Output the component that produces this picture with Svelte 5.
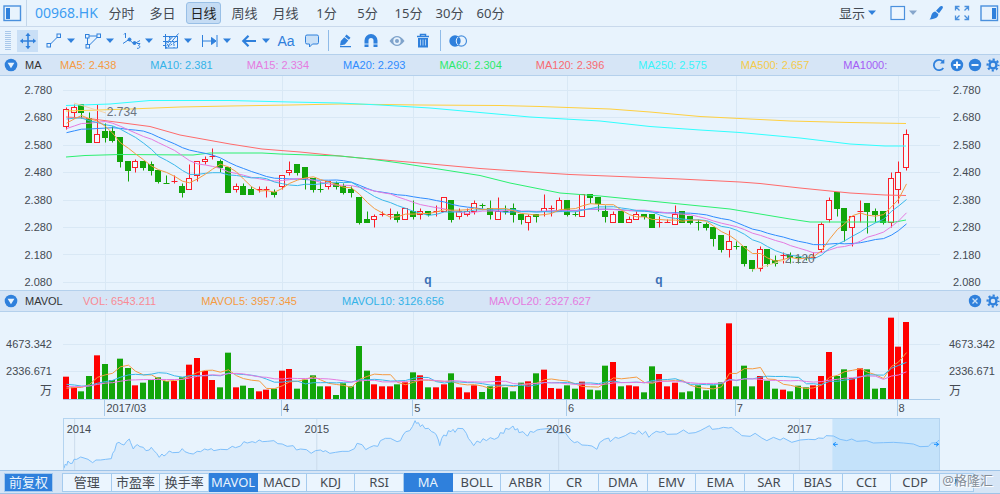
<script lang="ts">
  // up, high, body top, body bottom, low (in cents)
  const candles = [
    [1, 272, 271, 265, 264], [1, 273, 272, 270, 268], [0, 273, 273, 270, 268], [0, 270, 268, 259, 259],
    [1, 273, 262, 259, 259], [0, 266, 263, 261, 259], [0, 265, 263, 260, 259], [0, 261, 261, 252, 250],
    [0, 252, 252, 249, 245], [1, 253, 252, 250, 248], [0, 252, 252, 250, 249], [0, 252, 251, 249, 247],
    [0, 249, 249, 245, 244], [0, 247, 244, 244, 244], [1, 247, 245, 245, 244], [0, 244, 243, 241, 239],
    [1, 251, 246, 242, 242], [1, 252, 252, 247, 245], [1, 254, 253, 252, 251], [1, 257, 254, 254, 253],
    [0, 253, 252, 250, 248], [0, 250, 250, 241, 241], [1, 244, 243, 242, 241], [0, 244, 243, 240, 240],
    [0, 243, 242, 240, 240], [1, 243, 242, 242, 241], [1, 243, 242, 242, 239], [0, 242, 241, 240, 239],
    [1, 247, 247, 243, 242], [1, 252, 249, 248, 247], [0, 251, 251, 248, 247], [0, 250, 250, 246, 242],
    [0, 246, 246, 242, 241], [0, 245, 242, 242, 241], [1, 245, 245, 243, 242], [0, 245, 244, 243, 242],
    [0, 244, 243, 241, 240], [0, 243, 242, 241, 239], [0, 239, 239, 230, 229], [0, 234, 231, 230, 230],
    [1, 233, 232, 231, 228], [1, 234, 233, 233, 232], [1, 235, 233, 233, 231], [0, 234, 233, 231, 230],
    [1, 235, 235, 231, 231], [0, 238, 234, 232, 231], [1, 235, 234, 233, 231], [0, 234, 234, 233, 232],
    [1, 236, 234, 234, 232], [1, 239, 239, 234, 234], [0, 238, 238, 231, 230], [1, 235, 234, 232, 231],
    [1, 235, 234, 233, 232], [1, 238, 237, 234, 233], [0, 237, 236, 236, 235], [0, 238, 235, 233, 231],
    [1, 239, 234, 231, 231], [0, 236, 234, 234, 233], [0, 237, 235, 233, 230], [0, 233, 233, 231, 229],
    [1, 233, 232, 230, 227], [0, 233, 233, 232, 230], [1, 240, 235, 234, 232], [1, 236, 235, 235, 232],
    [1, 239, 238, 234, 234], [0, 238, 238, 233, 232], [0, 234, 233, 233, 232], [1, 240, 240, 232, 232],
    [0, 240, 240, 239, 237], [0, 239, 239, 237, 234], [0, 236, 234, 232, 230], [1, 234, 233, 230, 230],
    [0, 234, 234, 230, 230], [1, 232, 231, 230, 230], [1, 234, 233, 231, 231], [0, 233, 233, 232, 231],
    [0, 233, 233, 228, 228], [1, 232, 230, 230, 228], [1, 231, 230, 230, 230], [1, 236, 233, 229, 229],
    [0, 234, 234, 230, 230], [0, 232, 232, 230, 229], [0, 231, 230, 230, 227], [0, 230, 229, 228, 227],
    [0, 228, 228, 224, 221], [0, 225, 225, 220, 219], [1, 227, 223, 220, 217], [0, 223, 221, 221, 220],
    [0, 221, 221, 215, 214], [0, 216, 216, 213, 212], [1, 221, 220, 213, 212], [0, 220, 220, 215, 214],
    [0, 218, 216, 215, 214], [1, 219, 218, 218, 215], [0, 219, 218, 217, 215], [0, 218, 217, 217, 215],
    [0, 218, 217, 217, 216], [1, 219, 217, 217, 216], [1, 230, 229, 220, 219], [1, 239, 238, 231, 230],
    [0, 241, 241, 235, 232], [0, 235, 235, 227, 223], [1, 232, 232, 228, 221], [1, 238, 234, 234, 230],
    [0, 237, 237, 234, 226], [0, 235, 234, 233, 230], [0, 234, 234, 230, 229], [1, 248, 246, 230, 228],
    [1, 252, 248, 242, 237], [1, 264, 262, 250, 249]
  ];

  const volumes = [
    67, 35, 23, 69, 131, 105, 57, 121, 93, 41, 49, 57, 65, 54, 54, 65, 103, 123, 84, 57, 35, 139, 35, 40, 33, 23,
    28, 31, 85, 90, 31, 58, 71, 38, 38, 12, 47, 38, 159, 85, 44, 38, 38, 44, 50, 80, 71, 35, 35, 44, 77, 35, 20,
    41, 21, 38, 69, 35, 23, 49, 53, 77, 88, 33, 31, 41, 31, 52, 28, 26, 100, 111, 38, 41, 38, 20, 98, 75, 38, 49,
    20, 23, 41, 26, 41, 50, 227, 38, 100, 38, 69, 55, 31, 28, 23, 40, 35, 41, 69, 141, 69, 89, 63, 92, 89, 31, 33,
    244, 157, 231
  ];

  // values before the visible range, so the averages start at the left edge
  const priorCloses = [
    ...Array(5).fill(258), ...Array(5).fill(257), ...Array(5).fill(269), 264, 264, 265, 266
  ];
  const priorVolumes = [...Array(10).fill(30), ...Array(5).fill(56), 23, 23, 24, 23];

  const step = 7.706;
  const px = (i: number) => Math.round(3 + i * step) + 0.5;
  const py = (cents: number) => 14.3 + (278 - cents) * 2.738;
  const row = (cents: number) => Math.round(py(cents)) + 0.5;
  const vy = (v: number) => 87 - v / 3;

  function average(prior: number[], values: number[], n: number, y: (v: number) => number) {
    const all = [...prior, ...values];
    return values
      .map((_, i) => {
        const end = i + prior.length + 1;
        const sum = all.slice(end - n, end).reduce((a, b) => a + b, 0);
        return `${px(i)},${y(sum / n).toFixed(1)}`;
      })
      .join(' ');
  }

  const closes = candles.map(([up, , top, bottom]) => (up ? top : bottom));

  const priceLines = [
    { color: '#ffd040', points: '3,35 67,33 117,31 167,30 227,29 277,28 357,29 437,29.5 477,30.5 547,33 587,36 637,40.5 677,42.5 727,45 787,46.5 843,47.5' },
    { color: '#30ffff', points: '3,29.5 47,28 87,24.5 167,24.5 227,26 277,27 317,29 367,32 417,36.5 467,41 537,45 587,50.5 637,54 677,56.5 737,62 787,68 822,70 843,70' },
    { color: '#ff6b6b', points: '3,41 22,42 45,45 87,50.5 117,59 167,68 199,73 237,76 297,82 357,87 417,92.5 467,96 507,98.5 557,100.5 617,103 677,106 697,107.5 737,112 787,117 822,119 843,119.5' },
    { color: '#2cf070', points: '3,81 22,79.5 57,78.5 130,79 147,77 199,77 217,78 277,80 307,83 337,87 369,92 417,99.5 447,107 497,117 537,120 587,125 637,130 667,133 697,138 727,143 747,146 767,146 832,146 843,144' },
    { color: '#2f8cff', points: average(priorCloses, closes, 20, py) },
    { color: '#e57be0', points: average(priorCloses, closes, 15, py) },
    { color: '#3ab8ea', points: average(priorCloses, closes, 10, py) },
    { color: '#f59b42', points: average(priorCloses, closes, 5, py) }
  ];

  const volumeLines = [
    { color: '#f59b42', points: average(priorVolumes, volumes, 5, vy) },
    { color: '#3ab8ea', points: average(priorVolumes, volumes, 10, vy) },
    { color: '#e57be0', points: average(priorVolumes, volumes, 20, vy) }
  ];

  const months = [
    { label: '', span: 42 },
    { label: '2017/03', span: 177 },
    { label: '4', span: 131 },
    { label: '5', span: 154 },
    { label: '6', span: 169 },
    { label: '7', span: 162 },
    { label: '8', span: 42 }
  ];
  const monthLines = [42, 219, 350, 504, 673, 835];

  const prices = ['2.780', '2.680', '2.580', '2.480', '2.380', '2.280', '2.180', '2.080'];

  const history =
    '190,205 194,192 198,196 202,183 208,190 215,190 220,178 228,178 240,171 250,174 262,178 276,188 286,180 300,180 315,178 332,176 336,160 342,152 348,130 355,127 362,132 370,135 378,124 386,117 390,128 398,147 404,138 410,134 418,140 428,142 436,152 446,150 452,142 460,152 468,160 476,172 484,162 490,168 496,164 506,153 516,158 536,157 545,146 553,155 566,160 578,162 590,154 600,155 612,147 622,150 632,146 640,152 660,148 680,149 695,139 705,143 720,138 730,125 740,129 755,125 765,128 776,120 786,125 800,124 820,122 832,131 845,132 860,139 878,137 888,150 900,147 918,149 932,160 945,152 960,150 968,155 975,152 988,160 1005,157 1025,154 1045,154 1062,146 1070,130 1085,134 1096,149 1108,142 1120,137 1132,139 1140,122 1155,115 1170,115 1190,125 1200,122 1208,105 1216,95 1228,92 1236,80 1244,62 1248,70 1254,68 1260,80 1266,74 1274,86 1284,85 1294,95 1302,98 1308,105 1314,120 1318,137 1324,115 1330,105 1338,108 1344,92 1352,95 1358,88 1364,97 1372,85 1388,86 1398,100 1404,115 1412,125 1420,137 1430,123 1440,128 1448,116 1458,122 1470,113 1482,118 1494,112 1500,98 1510,100 1516,85 1526,88 1538,78 1544,90 1552,86 1556,98 1568,95 1576,104 1582,108 1590,94 1600,97 1610,90 1620,88 1640,86 1660,87 1675,100 1695,98 1705,112 1712,120 1722,128 1732,125 1745,135 1762,136 1775,138 1790,148 1798,128 1812,118 1825,114 1830,125 1845,112 1855,115 1875,107 1890,98 1905,102 1916,92 1926,103 1936,94 1946,112 1954,103 1968,94 1980,97 1992,94 2000,103 2030,102 2050,90 2065,100 2085,98 2100,92 2115,84 2128,77 2136,88 2155,86 2170,82 2185,84 2195,82 2205,92 2218,100 2225,107 2250,109 2265,100 2285,114 2300,122 2320,112 2340,120 2350,114 2375,127 2400,120 2425,118 2445,119 2455,114 2470,115 2478,107 2500,108 2520,118 2540,122 2555,117 2570,124 2600,122 2620,129 2650,128 2680,127 2710,129 2740,132 2760,140 2785,139 2795,129 2810,128 2817,120';

  const years = [
    { label: '2014', x: 222 },
    { label: '2015', x: 949 },
    { label: '2016', x: 1675 },
    { label: '2017', x: 2398 }
  ];

  const periods = ['分时', '多日', '日线', '周线', '月线', '1分', '5分', '15分', '30分', '60分'];
  let period = $state('日线');

  const averages = [
    { text: 'MA5: 2.438', color: '#f59b42' },
    { text: 'MA10: 2.381', color: '#33b3e8' },
    { text: 'MA15: 2.334', color: '#e57be0' },
    { text: 'MA20: 2.293', color: '#2f8cff' },
    { text: 'MA60: 2.304', color: '#2cea6c' },
    { text: 'MA120: 2.396', color: '#f86b72' },
    { text: 'MA250: 2.575', color: '#38f4fa' },
    { text: 'MA500: 2.657', color: '#f4cb4c' },
    { text: 'MA1000:', color: '#a45cf5' }
  ];

  const volumeAverages = [
    { text: 'VOL: 6543.211', color: '#f98a94' },
    { text: 'MAVOL5: 3957.345', color: '#f59b42' },
    { text: 'MAVOL10: 3126.656', color: '#33b3e8' },
    { text: 'MAVOL20: 2327.627', color: '#e57be0' }
  ];

  const indicators = [
    '管理', '市盈率', '换手率', 'MAVOL', 'MACD', 'KDJ', 'RSI', 'MA', 'BOLL',
    'ARBR', 'CR', 'DMA', 'EMV', 'EMA', 'SAR', 'BIAS', 'CCI', 'CDP'
  ];
  let active = $state(['MAVOL', 'MA']);

  function toggle(name: string) {
    active = active.includes(name) ? active.filter((n) => n !== name) : [...active, name];
  }
</script>

{#snippet caret()}
  <svg class="caret" width="10" height="6" viewBox="0 0 10 6"><path d="M1 0.5h8L5 5z" /></svg>
{/snippet}

{#snippet collapse()}
  <button class="icon" aria-label="Collapse">
    <svg width="14" height="14" viewBox="0 0 14 14">
      <circle cx="7" cy="7" r="6.3" fill="#2f80dc" />
      <path d="M3.6 4.7h6.8L7 10.2z" fill="#e8f3fd" />
    </svg>
  </button>
{/snippet}

{#snippet gear()}
  <button class="icon" aria-label="Settings">
    <svg width="14" height="14" viewBox="0 0 14 14" fill="none" stroke="#2f80dc">
      <circle cx="7" cy="7" r="3.5" stroke-width="2.4" />
      <circle cx="7" cy="7" r="5.5" stroke-width="2" stroke-dasharray="2.2 2.12" stroke-dashoffset="1.1" />
    </svg>
  </button>
{/snippet}

<div class="app">
  <header class="topbar">
    <button class="icon panel" aria-label="Left panel">
      <svg width="19" height="17" viewBox="0 0 19 17">
        <rect x="1" y="1" width="16.5" height="14.5" fill="#e8f3fd" stroke="#4a90dd" stroke-width="1.4" />
        <rect x="3" y="3" width="4" height="11" fill="#2f80dc" />
      </svg>
    </button>
    <span class="symbol">00968.HK</span>
    <nav class="periods">
      {#each periods as p}
        <button class:active={p === period} onclick={() => (period = p)}>{p}</button>
      {/each}
    </nav>
    <div class="view">
      <button class="show">显示{@render caret()}</button>
      <button class="shape" aria-label="Layout">
        <svg width="16" height="16" viewBox="0 0 16 16">
          <rect x="1" y="1.5" width="13.5" height="13" fill="#edf6fe" stroke="#4a90dd" stroke-width="1.2" />
        </svg>
        {@render caret()}
      </button>
      <button class="icon" aria-label="Theme">
        <svg width="16" height="16" viewBox="0 0 16 16" fill="#2f80dc">
          <path d="M14.4 1.2c.8.5.6 1.4.1 2.2L11 8.2 8 5.8l4-4.2c.7-.7 1.7-.8 2.4-.4z" />
          <path d="M7.3 6.5l3 2.6c.3 2.7-2.3 5.3-8.8 5.3 1.8-1.5 1.2-3.6 2.4-5.5.8-1.4 2-2.2 3.4-2.4z" />
        </svg>
      </button>
      <button class="icon" aria-label="Full screen">
        <svg width="16" height="16" viewBox="0 0 16 16" fill="none" stroke="#4a90dd" stroke-width="1.3">
          <path d="M1.5 5.5v-4h4M10.5 1.5h4v4M14.5 10.5v4h-4M5.5 14.5h-4v-4M1.5 1.5l4 4M14.5 1.5l-4 4M14.5 14.5l-4-4M1.5 14.5l4-4" />
        </svg>
      </button>
      <button class="icon" aria-label="Right panel">
        <svg width="19" height="17" viewBox="0 0 19 17">
          <rect x="1" y="1" width="16.5" height="14.5" fill="#e8f3fd" stroke="#4a90dd" stroke-width="1.4" />
          <rect x="12" y="3" width="4" height="11" fill="#2f80dc" />
        </svg>
      </button>
    </div>
  </header>

  <div class="toolbar">
    <span class="grip"></span>
    <button class="tool selected" aria-label="Move">
      <svg width="18" height="18" viewBox="0 0 18 18" fill="#2f80dc">
        <path d="M8.2 3h1.6v12H8.200zM3 8.200h12v1.600H3z" />
        <path d="M9 .8l2.600 3.200H6.400zM9 17.200l2.600-3.200H6.400zM.8 9L4 6.400v5.200zM17.200 9L14 6.400v5.200z" />
      </svg>
    </button>
    <div class="drawing">
      <button class="split" aria-label="Trend line">
        <svg width="18" height="18" viewBox="0 0 18 18" class="line">
          <path d="M5 12.5L12 5.5" />
          <rect x="2" y="11.5" width="3.5" height="3.5" />
          <rect x="12" y="2" width="3.5" height="3.5" />
        </svg>
        {@render caret()}
      </button>
      <button class="split" aria-label="Polygon">
        <svg width="18" height="18" viewBox="0 0 18 18" class="line">
          <path d="M5 4h8M3.5 6v7M5 13.5L13.5 5" />
          <rect x="1.5" y="2.5" width="3.5" height="3.5" />
          <rect x="13" y="2" width="3.5" height="3.5" />
          <rect x="2" y="12.5" width="3.5" height="3.5" />
        </svg>
        {@render caret()}
      </button>
      <button class="split" aria-label="Wave">
        <svg width="18" height="18" viewBox="0 0 18 18" class="line">
          <path d="M0 11.5l6-4 5 4.5 6-3.5M1 2.5L2.5 1v5" />
          <path d="M14 11.5h3l-1.5 2c2 .2 2 3.200-1.500 2.800" />
          <circle cx="6.5" cy="7.5" r="1.5" class="fill" />
          <circle cx="11.5" cy="11" r="1.5" class="fill" />
        </svg>
        {@render caret()}
      </button>
      <button class="split" aria-label="Gann grid">
        <svg width="18" height="18" viewBox="0 0 18 18" class="line">
          <path d="M1 4.5h14M1 9.5h2M1 13.5h2M3.5 2v14h12V4M6 14L16.5 1.5M3.5 12l7-7" />
          <path d="M3.5 16.5L15 9M3.5 16.5L9 5M7.500 4.500v3M12 9v7M4 9.500h11" stroke-dasharray="2 1" />
        </svg>
        {@render caret()}
      </button>
      <button class="split" aria-label="Range">
        <svg width="18" height="18" viewBox="0 0 18 18" class="line">
          <path d="M1.5 3v12M16 3v12M2 9h10" />
          <path d="M10.5 5.5L15 9l-4.5 3.5z" class="fill" />
        </svg>
        {@render caret()}
      </button>
      <button class="split" aria-label="Arrow">
        <svg width="18" height="18" viewBox="0 0 18 18" class="line">
          <path d="M3.5 9H16M8.5 3.8L3.3 9l5.2 5.2" stroke-width="2.2" />
        </svg>
        {@render caret()}
      </button>
    </div>
    <div class="extras">
      <button class="tool text">Aa</button>
      <button class="tool" aria-label="Comment">
        <svg width="18" height="18" viewBox="0 0 18 18" class="line">
          <path d="M4 3h10q1.500 0 1.500 1.500v6q0 1.500-1.500 1.500H9.500L6.500 15v-3H4q-1.500 0-1.500-1.500v-6Q2.500 3 4 3z" fill="#c9e0f7" />
        </svg>
      </button>
      <span class="divider"></span>
      <button class="tool" aria-label="Pencil">
        <svg width="18" height="18" viewBox="0 0 18 18" fill="#2f80dc">
          <path d="M10.5 2.5l4 3.2-1.6 2-4-3.2zM8.3 5.2l4 3.2-3.5 4-4.8 1.1.8-4.5zM4 14h11v1.200H4z" />
        </svg>
      </button>
      <button class="tool" aria-label="Magnet">
        <svg width="18" height="18" viewBox="0 0 18 18">
          <path d="M4.5 15V8.5a4.5 4.5 0 0 1 9 0V15" fill="none" stroke="#2f80dc" stroke-width="4" />
          <path d="M2 12h5M11 12h5" stroke="#d5e8fa" />
        </svg>
      </button>
      <button class="tool" aria-label="Hide drawings">
        <svg width="18" height="18" viewBox="0 0 18 18">
          <path d="M1.5 9Q9-1 16.5 9 9 19 1.5 9z" fill="#7fa3cb" />
          <circle cx="9" cy="9" r="3.7" fill="#e8f3fd" />
          <circle cx="9" cy="9" r="2" fill="#7fa3cb" />
        </svg>
      </button>
      <button class="tool" aria-label="Delete">
        <svg width="18" height="18" viewBox="0 0 18 18">
          <path d="M3 4.5h12M6.5 4V2.5h5V4" fill="none" stroke="#2f80dc" stroke-width="1.5" />
          <path d="M4 6h10v9.500H4z" fill="#2f80dc" />
          <path d="M6.5 7.5v6M9 7.5v6M11.5 7.5v6" stroke="#a9cdf3" />
        </svg>
      </button>
      <span class="divider tall"></span>
      <button class="tool" aria-label="Compare">
        <svg width="18" height="18" viewBox="0 0 18 18">
          <circle cx="12.3" cy="9" r="5.2" fill="none" stroke="#4a90dd" stroke-width="1.2" />
          <circle cx="6" cy="9" r="5.7" fill="#2f80dc" />
          <path d="M9.2 4.9a5.2 5.2 0 0 0 0 8.2" fill="none" stroke="#e8f3fd" />
        </svg>
      </button>
    </div>
  </div>

  <div class="legend">
    {@render collapse()}
    <span class="name">MA</span>
    <div class="values">
      {#each averages as item}
        <span style="color: {item.color}">{item.text}</span>
      {/each}
    </div>
    <div class="actions">
      <button class="icon" aria-label="Reset">
        <svg width="14" height="14" viewBox="0 0 14 14" fill="none" stroke="#2f80dc">
          <path d="M11.3 10a5.2 5.2 0 1 1-.6-6.7" stroke-width="1.8" />
          <path d="M12.3 1v4.5H8z" fill="#2f80dc" stroke="none" />
        </svg>
      </button>
      <button class="icon" aria-label="Zoom in">
        <svg width="14" height="14" viewBox="0 0 14 14">
          <circle cx="7" cy="7" r="6.2" fill="#2f80dc" />
          <path d="M3.5 7h7M7 3.5v7" stroke="#fff" stroke-width="1.8" />
        </svg>
      </button>
      <button class="icon" aria-label="Zoom out">
        <svg width="14" height="14" viewBox="0 0 14 14">
          <circle cx="7" cy="7" r="6.2" fill="#2f80dc" />
          <path d="M3.5 7h7" stroke="#fff" stroke-width="1.8" />
        </svg>
      </button>
      {@render gear()}
    </div>
  </div>

  <div class="pane">
    <div class="axis price">
      {#each prices as p}<span>{p}</span>{/each}
    </div>
    <div class="plot">
      <svg class="main" viewBox="0 0 877 214" preserveAspectRatio="none">
        <g class="gridlines">
          {#each prices as _, i}
            <path d="M0 {Math.round(14 + i * 27.4) + 0.5}H877" />
          {/each}
          {#each monthLines as x}<path d="M{x + 0.5} 0V214" />{/each}
        </g>
        {#each candles as [up, high, top, bottom, low], i}
          <g class={up ? 'up' : 'down'}>
            {#if top === bottom}
              <path d="M{px(i)} {row(high)}V{row(low)}M{px(i) - 3} {row(top)}h6" />
            {:else}
              <path d="M{px(i)} {row(high)}V{row(top)}M{px(i)} {row(bottom)}V{row(low)}" />
              <rect x={px(i) - 3} y={row(top)} width="5" height={row(bottom) - row(top)} />
            {/if}
          </g>
        {/each}
        {#each priceLines as line}
          <polyline class="average" points={line.points} stroke={line.color} />
        {/each}
        <path class="pointer" d="M11 27L43 37M689 194L722 184" />
      </svg>
      <span class="peak">2.734</span>
      <span class="trough">2.120</span>
      <span class="event" style="left: {(365 / 877) * 100}%">q</span>
      <span class="event" style="left: {(596 / 877) * 100}%">q</span>
    </div>
    <div class="axis price right">
      {#each prices as p}<span>{p}</span>{/each}
    </div>
  </div>

  <div class="legend">
    {@render collapse()}
    <span class="name wide">MAVOL</span>
    <div class="values spaced">
      {#each volumeAverages as item}
        <span style="color: {item.color}">{item.text}</span>
      {/each}
    </div>
    <div class="actions">
      <button class="icon" aria-label="Close">
        <svg width="14" height="14" viewBox="0 0 14 14">
          <circle cx="7" cy="7" r="6.2" fill="#2f80dc" />
          <path d="M4.5 4.5l5 5M9.5 4.5l-5 5" stroke="#c9e0f7" stroke-width="1.3" />
        </svg>
      </button>
      {@render gear()}
    </div>
  </div>

  <div class="pane">
    <div class="axis volume">
      <span>4673.342</span><span>2336.671</span><span class="unit">万</span>
    </div>
    <div class="plot baseline">
      <svg class="bars" viewBox="0 0 877 87" preserveAspectRatio="none">
        <g class="gridlines">
          <path d="M0 32.5H877M0 59.5H877" />
          {#each monthLines as x}<path d="M{x + 0.5} 0V87" />{/each}
        </g>
        {#each volumes as v, i}
          <rect class={candles[i][0] ? 'bar-up' : 'bar-down'} x={px(i) - 3.5} y={vy(v)} width="6" height={v / 3} />
        {/each}
        {#each volumeLines as line}
          <polyline class="average" points={line.points} stroke={line.color} />
        {/each}
      </svg>
    </div>
    <div class="axis volume right">
      <span>4673.342</span><span>2336.671</span><span class="unit">万</span>
    </div>
  </div>

  <div class="dates">
    {#each months as m}
      <span class:tick={m.label} style="flex-grow: {m.span}">{m.label}</span>
    {/each}
  </div>

  <div class="overview">
    <svg viewBox="190 57 2627 153" preserveAspectRatio="none">
      <polygon points="190,210 {history} 2817,210" fill="#dcecfb" />
      <rect x="2497" y="57" width="320" height="153" fill="#b4dcfa" opacity="0.6" />
      {#each years as y}<path d="M{y.x} 57V210" stroke="#cbdcec" />{/each}
      <polyline points={history} fill="none" stroke="#7fc0fb" />
      <path d="M2513 133h-14M2507 127l-8 6 8 6M2802 133h14M2808 127l8 6-8 6" fill="none" stroke="#1890ff" />
    </svg>
    {#each years as y}
      <span style="left: {((y.x - 190) / 2627) * 100}%">{y.label}</span>
    {/each}
  </div>

  <footer>
    <button class="adjust">前复权</button>
    <div class="indicators">
      {#each indicators as name}
        <button class:active={active.includes(name)} onclick={() => toggle(name)}>{name}</button>
      {/each}
    </div>
    <button class="more" aria-label="More indicators">
      <svg width="6" height="8" viewBox="0 0 6 8"><path d="M1 0l4 4-4 4z" fill="#2f80dc" /></svg>
    </button>
    <span class="watermark">@格隆汇</span>
  </footer>
</div>

<style>
  :global(body) {
    margin: 0;
    background: #e8f3fd;
  }

  .app {
    font-family: 'Liberation Sans', 'Noto Sans CJK SC', sans-serif;
    font-size: 11px;
    line-height: 14px;
    color: #444a52;
    background: #e8f3fd;
    overflow: hidden;
  }

  button {
    font: inherit;
    color: inherit;
    background: none;
    border: none;
    padding: 0;
    margin: 0;
    cursor: pointer;
  }

  svg {
    display: block;
    flex-shrink: 0;
  }

  .icon {
    display: flex;
  }

  .caret {
    fill: #2f80dc;
  }

  /* Top bar */
  .topbar {
    display: flex;
    align-items: center;
    height: 26px;
    padding: 0 1px 0 3px;
    border-bottom: 1px solid #c9d9ec;
    font-family: 'Noto Sans', 'Noto Sans CJK SC', sans-serif;
    font-size: 13px;
    line-height: 18px;
    white-space: nowrap;
  }

  .panel {
    align-items: center;
    height: 26px;
    padding-right: 4px;
    margin-right: 8px;
    border-right: 1px solid #c3d6ea;
  }

  .symbol {
    width: 66px;
    font-size: 14px;
    color: #3d9df2;
  }

  .periods {
    display: flex;
    gap: 6px;
    margin-left: 3px;
  }

  .periods button {
    box-sizing: border-box;
    width: 35px;
    height: 22px;
    border: 1px solid transparent;
    border-radius: 3px;
  }

  .periods .active {
    background: #c5dcf4;
    border-color: #98bfe6;
    color: #222;
  }

  .view {
    display: flex;
    align-items: center;
    gap: 10px;
    margin-left: auto;
  }

  .show,
  .shape {
    display: flex;
    align-items: center;
    gap: 2px;
  }

  .show {
    margin-right: 3px;
  }

  .shape .caret {
    fill: #86a6cc;
  }

  /* Drawing tools */
  .toolbar {
    display: flex;
    align-items: center;
    height: 27px;
    padding-left: 5px;
  }

  .grip {
    width: 6px;
    height: 19px;
    margin-right: 6px;
    background: repeating-linear-gradient(#a9c8ea 0 1px, transparent 1px 2px);
  }

  .tool {
    display: flex;
    align-items: center;
    justify-content: center;
    width: 26px;
    height: 22px;
  }

  .selected {
    width: 21px;
    margin-right: 7px;
    background: #c9dff6;
  }

  .drawing {
    display: flex;
    gap: 8px;
  }

  .split {
    display: flex;
    align-items: center;
    gap: 3px;
  }

  .line {
    fill: none;
    stroke: #2f80dc;
  }

  .line rect {
    fill: #e8f3fd;
  }

  .line .fill {
    fill: #2f80dc;
  }

  .extras {
    display: flex;
    align-items: center;
    margin-left: 2px;
  }

  .text {
    font-size: 14px;
    color: #2f80dc;
  }

  .divider {
    width: 1px;
    height: 21px;
    margin: 0 3px;
    background: #8fbbe8;
  }

  .tall {
    margin: 0 4px;
  }

  /* Pane headers */
  .legend {
    box-sizing: border-box;
    display: flex;
    align-items: center;
    height: 22px;
    padding-left: 4px;
    background: #d6e5f6;
    border-top: 1px solid #b4d0ec;
    border-bottom: 1px solid #b4d0ec;
    white-space: nowrap;
  }

  .name {
    width: 35px;
    margin-left: 7px;
    color: #333;
  }

  .wide {
    width: 58px;
  }

  .values {
    display: flex;
    gap: 34px;
  }

  .spaced {
    gap: 45px;
  }

  .actions {
    display: flex;
    gap: 4px;
    margin-left: auto;
  }

  /* Charts */
  .pane,
  .dates {
    display: flex;
  }

  .axis {
    box-sizing: border-box;
    display: flex;
    flex-direction: column;
    flex: none;
    width: 63px;
    padding-right: 11px;
    text-align: right;
  }

  .right {
    width: 60px;
    padding-right: 0;
    text-align: left;
  }

  .price {
    justify-content: space-between;
    padding-top: 7px;
    padding-bottom: 1px;
  }

  .price.right {
    padding-left: 13px;
  }

  .volume {
    padding-top: 25px;
    gap: 13px;
  }

  .volume.right {
    padding-left: 9px;
  }

  .unit {
    margin-top: -7px;
    font-size: 12px;
  }

  .plot {
    position: relative;
    flex: 1;
    min-width: 0;
  }

  .plot svg {
    width: 100%;
  }

  .main {
    height: 214px;
  }

  .bars {
    height: 87px;
  }

  .baseline {
    border-bottom: 1px solid #a9cbea;
  }

  .gridlines {
    stroke: #d9e8f5;
    fill: none;
  }

  .up {
    stroke: #fa1e28;
    fill: #f3f9fe;
  }

  .down {
    stroke: #12a50a;
    fill: #12a50a;
  }

  .bar-up {
    fill: #ff0000;
  }

  .bar-down {
    fill: #12a50a;
  }

  .average {
    fill: none;
  }

  .pointer {
    stroke: #f5d3a8;
    fill: none;
  }

  .peak,
  .trough,
  .event {
    position: absolute;
    font-size: 12px;
    color: #6b7480;
  }

  .peak {
    left: 5%;
    top: 29px;
  }

  .trough {
    left: 82.3%;
    top: 176px;
  }

  .event {
    top: 197px;
    transform: translateX(-50%);
    font-weight: bold;
    color: #3a6fb5;
  }

  .dates {
    height: 18px;
    padding: 0 60px 0 63px;
  }

  .dates span {
    flex: 0 1 0;
    box-sizing: border-box;
    height: 16px;
    line-height: 17px;
  }

  .dates .tick {
    padding-left: 1px;
    border-left: 1px solid #a9cbea;
  }

  .overview {
    position: relative;
    box-sizing: border-box;
    height: 52px;
    margin: 0 60px 0 63px;
    border: 1px solid #b4d4f0;
    border-bottom: none;
  }

  .overview svg {
    width: 100%;
    height: 51px;
  }

  .overview svg :global(*) {
    vector-effect: non-scaling-stroke;
  }

  .overview span {
    position: absolute;
    top: 3px;
    transform: translateX(-50%);
  }

  /* keeps the first year inside the frame */
  .overview svg + span {
    transform: none;
    margin-left: -8px;
  }

  /* Indicator tabs */
  footer {
    position: relative;
    box-sizing: border-box;
    display: flex;
    align-items: center;
    height: 24px;
    border-top: 1px solid #9fc4e8;
    border-bottom: 1px solid #9fc4e8;
    background: #d6e5f6;
    font-family: 'Noto Sans', 'Noto Sans CJK SC', sans-serif;
    font-size: 13px;
    line-height: 16px;
    white-space: nowrap;
  }

  .adjust {
    width: 47px;
    height: 17px;
    margin: 0 10px 0 5px;
    background: #2f80dc;
    outline: 1px solid #a5caf0;
    color: #e8f3fd;
  }

  .indicators {
    display: flex;
    flex: 1;
    min-width: 0;
    border-left: 1px solid #a5cbee;
  }

  .indicators button {
    box-sizing: border-box;
    flex: 1 1 0;
    min-width: 0;
    height: 19px;
    background: #ebf5fe;
    border: 1px solid #a5cbee;
    border-left: none;
  }

  .indicators .active {
    background: #2f80dc;
    border-color: #2f80dc;
    color: #e8f3fd;
  }

  .more {
    box-sizing: border-box;
    display: flex;
    align-items: center;
    justify-content: center;
    width: 34px;
    height: 19px;
    margin-right: 26px;
    border: 1px solid #a5cbee;
    border-left: none;
    background: #e4f0fb;
  }

  .watermark {
    position: absolute;
    right: 7px;
    top: 1px;
    color: #858d97;
    text-shadow: 1px 1px 0 #fff;
  }
</style>
